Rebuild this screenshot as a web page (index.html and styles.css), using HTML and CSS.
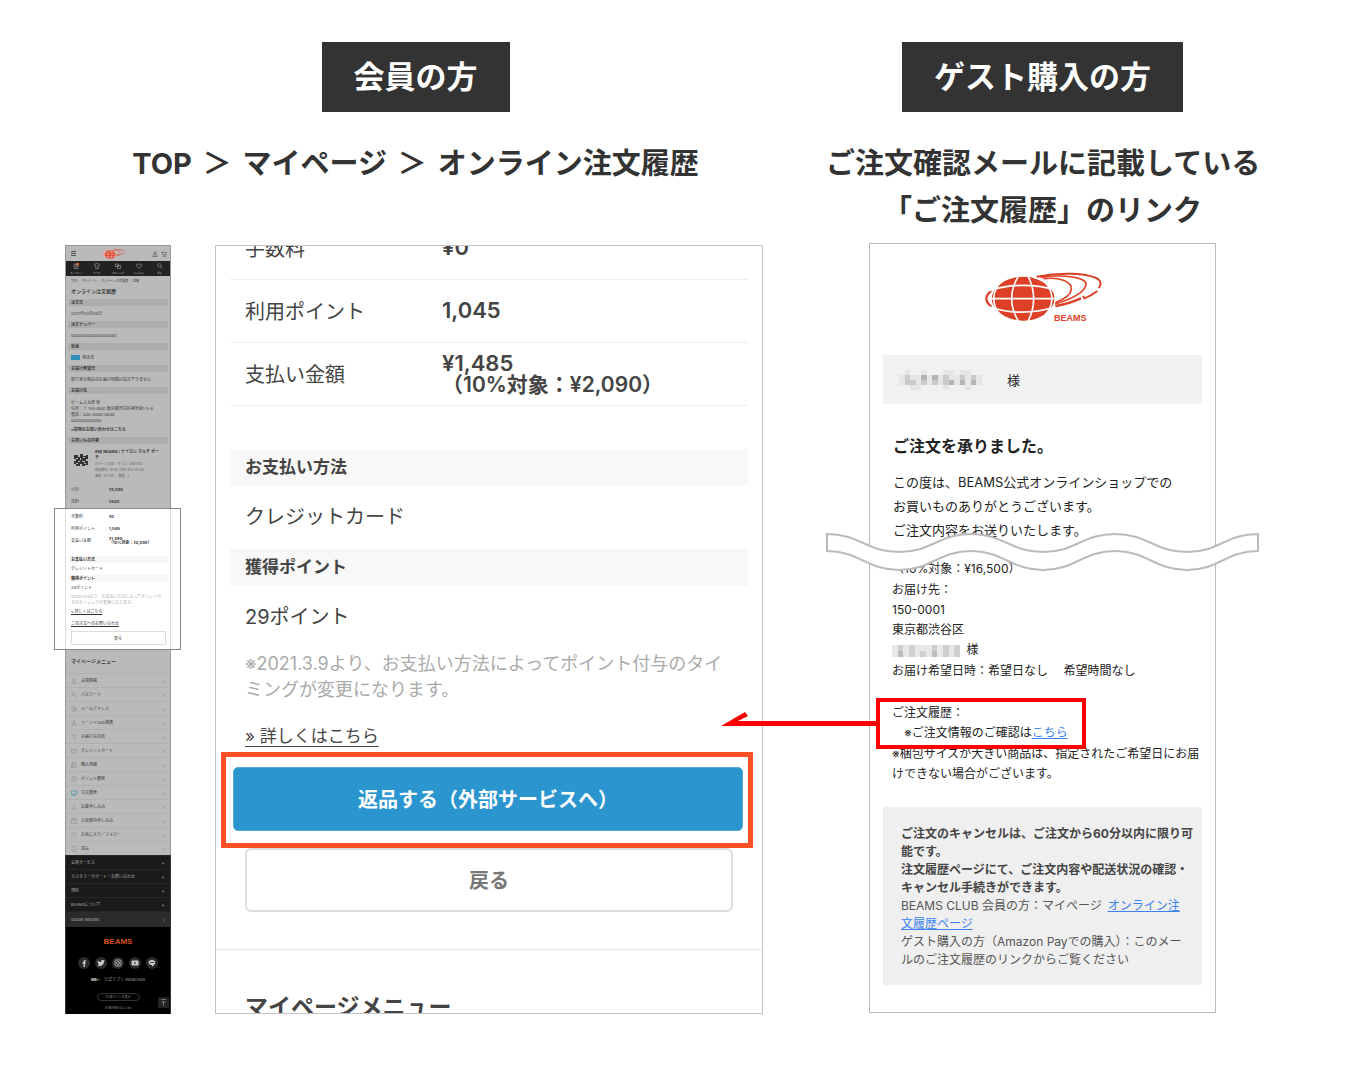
FILE: index.html
```html
<!DOCTYPE html>
<html lang="ja">
<head>
  <meta charset="UTF-8" />
  <title>返品手続きの方法</title>
  <meta name="viewport" content="width=device-width, initial-scale=1" />
  <link rel="stylesheet" href="styles.css">
</head>

<body>
  <!-- アイコン -->
  <svg class="sprite" aria-hidden="true">
    <symbol id="globe" viewBox="370 108 354 150">
      <path fill="#dd4026" d="M401 160C425 134 455 122 488 122S552 136 572 160Q592 188 572 216C552 242 520 254 488 254S425 242 401 216Q385 188 401 160Z"/>
      <path fill="none" stroke="#dd4026" stroke-width="7" d="M394 163Q360 188 394 213"/>
      <g fill="none" stroke="#fff" stroke-width="5">
        <path d="M384 188H592M384 164Q487 132 592 164M384 212Q487 246 592 210"/>
        <path d="M476 116Q430 188 476 260M500 116Q538 188 500 260"/>
        <path d="M446 112Q352 188 446 264M526 112Q622 188 526 264"/>
        <path d="M408 150Q372 188 408 226"/>
      </g>
      <g fill="none" stroke="#dd4026" stroke-width="5">
        <path d="M528 122C600 108 668 112 702 124C724 132 722 146 714 156" stroke-width="6"/>
        <path d="M540 124C610 114 680 124 676 146C672 170 630 190 584 204"/>
        <path d="M548 128C600 122 634 138 632 160C630 178 604 192 584 200"/>
        <path d="M584 210Q625 203 661 187" stroke-width="7"/>
        <path d="M667 180L671 187Q690 180 710 165" stroke-width="6"/>
      </g>
    </symbol>
    <symbol id="i-user" viewBox="0 0 12 12"><circle cx="6" cy="3.5" r="2.2"/><path d="M1.5 11Q2 6.500 6 6.500T10.500 11Z"/></symbol>
    <symbol id="i-key" viewBox="0 0 12 12"><circle cx="4" cy="4" r="2.500"/><path d="M6 6L11 10.500M9 9V11"/></symbol>
    <symbol id="i-at" viewBox="0 0 12 12"><circle cx="6" cy="6" r="5"/><circle cx="6" cy="6" r="2"/><path d="M8 4V7Q9 9 11 6"/></symbol>
    <symbol id="i-share" viewBox="0 0 12 12"><circle cx="6" cy="2.500" r="1.500"/><circle cx="2.500" cy="9.500" r="1.500"/><circle cx="9.500" cy="9.500" r="1.500"/><path d="M5 4L3 8M7 4L9 8M4 9.500H8"/></symbol>
    <symbol id="i-send" viewBox="0 0 12 12"><path d="M1 2H11L6.500 11L5 6Z"/></symbol>
    <symbol id="i-card" viewBox="0 0 12 12"><path d="M1 2H11V10H1ZM1 5H11"/></symbol>
    <symbol id="i-doc" viewBox="0 0 12 12"><path d="M3 1H10V11H3ZM1 4V11H3M5 4H8M5 6H8"/></symbol>
    <symbol id="i-point" viewBox="0 0 12 12"><circle cx="6" cy="6" r="5"/><path d="M5 9V3H6Q8.500 4.500 5 6.500"/></symbol>
    <symbol id="i-screen" viewBox="0 0 12 12"><path d="M1 2H11V9H1ZM4 11H8"/></symbol>
    <symbol id="i-hanger" viewBox="0 0 12 12"><path d="M5 3Q6 0 7 3L6 5L1 10H11L6 5"/></symbol>
    <symbol id="i-box" viewBox="0 0 12 12"><path d="M1 1H11V11H1ZM4 1V5H8V1"/></symbol>
    <symbol id="i-heart" viewBox="0 0 12 12"><path d="M6 11L1.500 6C-.5 3 3 0 6 3.500C9 0 12.500 3 10.500 6Z"/></symbol>
    <symbol id="i-door" viewBox="0 0 12 12"><path d="M2 1H10V11H2ZM7.500 6V7"/></symbol>
    <symbol id="i-shirt" viewBox="0 0 12 12"><path d="M4 1Q6 3 8 1L11 3L10 6L8.500 5.500V11H3.500V5.500L2 6L1 3Z"/></symbol>
    <symbol id="i-styling" viewBox="0 0 12 12"><path d="M1 2H7V7H1ZM5 5H11V11H5Z"/></symbol>
    <symbol id="i-search" viewBox="0 0 12 12"><circle cx="5" cy="5" r="3.500"/><path d="M7.500 7.500L11 11"/></symbol>
    <symbol id="i-news" viewBox="0 0 12 12"><path d="M2 2H10V11H2ZM4 4H8M4 6H8M4 8H8"/></symbol>
    <symbol id="i-cart" viewBox="0 0 12 12"><path d="M0 2H2L4 8H10L11 3H3"/><circle cx="5" cy="10.500" r=".8"/><circle cx="9" cy="10.500" r=".8"/></symbol>
  </svg>

  <main class="guide">
    <section class="member">
      <div class="head">
        <h1 class="tag">会員の方</h1>
        <p class="lead">TOP <span class="sep">＞</span> マイページ <span class="sep">＞</span> オンライン注文履歴</p>
      </div>

      <div class="screens">
        <!-- ページ全体の縮小図 -->
        <div class="mini">
          <div class="mini-part mini-dim">
            <div class="mini-header">
              <span class="burger"></span>
              <svg class="mini-logo"><use href="#globe"/></svg>
              <svg class="ico"><use href="#i-user"/></svg>
              <svg class="ico"><use href="#i-cart"/></svg>
            </div>
            <div class="mini-nav">
              <span class="has-new"><svg class="ico"><use href="#i-news"/></svg>タイムライン</span>
              <span><svg class="ico"><use href="#i-shirt"/></svg>アイテム</span>
              <span><svg class="ico"><use href="#i-styling"/></svg>スタイリング</span>
              <span><svg class="ico"><use href="#i-heart"/></svg>お気に入り</span>
              <span><svg class="ico"><use href="#i-search"/></svg>検索</span>
            </div>
            <p class="crumb">TOP ・ マイページ ・ オンライン注文履歴 ・ 詳細</p>
            <h2 class="mini-title">オンライン注文履歴</h2>
            <h3 class="mini-bar">注文日</h3>
            <p class="mini-val">2021年03月00日</p>
            <h3 class="mini-bar">注文ナンバー</h3>
            <p class="mini-val">000000000000000000</p>
            <h3 class="mini-bar">状態</h3>
            <p class="mini-val"><span class="status"></span>発送済</p>
            <h3 class="mini-bar">お届け希望日</h3>
            <p class="mini-val">取り寄せ商品のお届け時間は指定できません</p>
            <h3 class="mini-bar">お届け先</h3>
            <div class="mini-address">
              ビームス太郎 様<br>住所：〒 150-0001 東京都渋谷区神宮前1-5-8<br>電話：000-0000-0000<br>000000000000
              <p class="mini-ask">»荷物のお問い合わせはこちら</p>
            </div>
            <h3 class="mini-bar">お買いもの内容</h3>
            <div class="mini-item">
              <svg class="print" viewBox="0 0 14 12" shape-rendering="crispEdges"><path d="M0 1h4v2h2v-3h3v2h3v-1h2v4h-2v2h2v4h-3v1h-3v-2h-2v2h-4v-2h-2v-3h2v-2h-2z" fill="#333"/><path d="M2 4h2v1h-2zM6 4h1v2h-1zM9 3h2v1h-2zM4 7h2v1h-2zM8 7h3v1h-3zM2 9h2v1h-2zM10 9h2v1h-2z" fill="#bbb"/></svg>
              <div>
                <b>Ray BEAMS / ナイロン マルチ ポー<br>チ</b><br>
                <span class="spec">カラー：GOM／サイズ：ONE SIZE<br>商品番号：61-62-0162-902-00-88<br>価格：¥2,090 ／ 数量：1</span>
              </div>
            </div>
            <table class="mini-table">
              <tr><th>小計</th><td>¥2,090</td></tr>
              <tr><th>送料</th><td>¥440</td></tr>
            </table>
          </div>

          <div class="mini-focus">
            <div class="mini-part">
              <table class="mini-table">
                <tr><th>手数料</th><td>¥0</td></tr>
                <tr><th>利用ポイント</th><td>1,045</td></tr>
                <tr><th>支払い金額</th><td>¥1,485<br>（10%対象：¥2,090）</td></tr>
              </table>
              <h3 class="mini-bar mini-pay">お支払い方法</h3>
              <p class="mini-line">クレジットカード</p>
              <h3 class="mini-bar">獲得ポイント</h3>
              <p class="mini-line">29ポイント</p>
              <p class="mini-note">※2021.3.9より、お支払い方法によってポイント付与のタイミングが変更になります。</p>
              <p class="mini-line"><a href="#">» 詳しくはこちら</a></p>
              <p class="mini-line"><a href="#">この注文へのお問い合わせ</a></p>
              <button type="button" class="mini-back">戻る</button>
            </div>
          </div>

          <div class="mini-part mini-dim">
            <h2 class="mini-menu-title">マイページメニュー</h2>
            <ul class="mini-menu">
              <li><svg class="ico"><use href="#i-user"/></svg>会員情報</li>
              <li><svg class="ico"><use href="#i-key"/></svg>パスワード</li>
              <li><svg class="ico"><use href="#i-at"/></svg>メールアドレス</li>
              <li><svg class="ico"><use href="#i-share"/></svg>ソーシャルID連携</li>
              <li><svg class="ico"><use href="#i-send"/></svg>お届け先住所</li>
              <li><svg class="ico"><use href="#i-card"/></svg>クレジットカード</li>
              <li><svg class="ico"><use href="#i-doc"/></svg>購入明細</li>
              <li><svg class="ico"><use href="#i-point"/></svg>ポイント履歴</li>
              <li class="current"><svg class="ico"><use href="#i-screen"/></svg>注文履歴</li>
              <li><svg class="ico"><use href="#i-hanger"/></svg>試着申し込み</li>
              <li><svg class="ico"><use href="#i-box"/></svg>入荷案内申し込み</li>
              <li><svg class="ico"><use href="#i-heart"/></svg>お気に入り／フォロー</li>
              <li><svg class="ico"><use href="#i-door"/></svg>退会</li>
            </ul>
          </div>
          <div class="mini-part mini-dark">
            <ul class="mini-menu plus">
              <li>会員サービス</li>
              <li>カスタマーサポート・お問い合わせ</li>
              <li>規約</li>
              <li>BEAMSについて</li>
            </ul>
            <ul class="mini-menu global"><li>Global Website</li></ul>
          </div>
          <div class="mini-part mini-footer">
            <p class="brand">BEAMS</p>
            <div class="sns">
              <svg viewBox="0 0 12 12"><circle cx="6" cy="6" r="6" fill="#2b2b2b"/><path d="M5.500 10V6.500H4.500V5H5.500Q5.300 2.600 7.800 3V4.200Q6.800 4 6.900 5H7.800L7.600 6.500H6.900V10Z" fill="#ccc"/></svg>
              <svg viewBox="0 0 12 12"><circle cx="6" cy="6" r="6" fill="#2b2b2b"/><path d="M2.800 3.500Q4.300 5 6 5Q6 2.600 8 3.200L9.500 3L9 4.600C9 8.500 5 10 2.600 8.400L4 7.800Q3 7 3.200 6Q2.400 4.800 2.800 3.500Z" fill="#ccc"/></svg>
              <svg viewBox="0 0 12 12"><circle cx="6" cy="6" r="6" fill="#2b2b2b"/><rect x="3" y="3" width="6" height="6" rx="1.500" fill="none" stroke="#ccc" stroke-width=".8"/><circle cx="6" cy="6" r="1.500" fill="none" stroke="#ccc" stroke-width=".8"/></svg>
              <svg viewBox="0 0 12 12"><circle cx="6" cy="6" r="6" fill="#2b2b2b"/><rect x="2.500" y="3.500" width="7" height="5" rx="1" fill="#ccc"/><path d="M5.200 4.800L7.200 6L5.200 7.200Z" fill="#2b2b2b"/></svg>
              <svg viewBox="0 0 12 12"><circle cx="6" cy="6" r="6" fill="#2b2b2b"/><path d="M6 3C10 3 10.500 7 6 9.500V8C1.500 8 1.500 3 6 3Z" fill="#ccc"/><path d="M4 5.500H8" stroke="#2b2b2b" stroke-width=".8"/></svg>
            </div>
            <p class="app"><b>We:-</b>　公式アプリ WeBEAMS</p>
            <button type="button" class="pc">PC版サイトを表示</button>
            <p class="copy">© BEAMS Co., Ltd.</p>
            <svg class="to-top" viewBox="0 0 11 11"><rect width="11" height="11" rx="1" fill="#222"/><path d="M3 2.500H8M5.500 9V4M3.500 6L5.500 4L7.500 6" fill="none" stroke="#888" stroke-width=".8"/></svg>
          </div>
        </div>

        <!-- 注文履歴の拡大 -->
        <div class="order">
          <table class="amounts">
            <tr><th>手数料</th><td>¥0</td></tr>
            <tr><th>利用ポイント</th><td>1,045</td></tr>
            <tr><th>支払い金額</th><td>¥1,485<br><span class="tax">（10%対象：¥2,090）</span></td></tr>
          </table>
          <h2 class="bar">お支払い方法</h2>
          <p class="value">クレジットカード</p>
          <h2 class="bar">獲得ポイント</h2>
          <p class="value">29ポイント</p>
          <p class="note">※2021.3.9より、お支払い方法によってポイント付与のタイ<br>ミングが変更になります。</p>
          <p class="more"><a href="#">» 詳しくはこちら</a></p>
          <div class="return-box">
            <button type="button" class="return">返品する（外部サービスへ）</button>
          </div>
          <button type="button" class="back">戻る</button>
          <h2 class="menu-title">マイページメニュー</h2>
        </div>
      </div>
    </section>

    <section class="guest">
      <div class="head">
        <h1 class="tag">ゲスト購入の方</h1>
        <p class="lead">ご注文確認メールに記載している<br>「ご注文履歴」のリンク</p>
      </div>

      <div class="mail">
        <div class="logo">
          <svg class="logo-mark" viewBox="0 0 118 50" role="img" aria-label="BEAMS">
            <use href="#globe" width="118" height="50"/>
            <text x="70" y="49" class="logo-text">BEAMS</text>
          </svg>
        </div>
        <p class="to">
          <svg class="mosaic" viewBox="0 0 15 4" preserveAspectRatio="none" shape-rendering="crispEdges">
            <path fill="#e6e6e6" d="M0 1h15v2h-15zM1 0h1v1h-1zM4 0h1v1h-1zM8 0h2v1h-2zM11 0h2v1h-2zM2 3h2v1h-2zM8 3h1v1h-1zM12 3h1v1h-1z"/>
            <path fill="#cacaca" d="M1 1h1v2h-1zM2 2h1v1h-1zM4 1h1v2h-1zM6 1h1v2h-1zM8 1h1v2h-1zM9 2h1v1h-1zM11 1h1v2h-1zM13 1h1v2h-1z"/>
            <path fill="#b4b4b4" d="M4 1h1v1h-1zM6 1h1v1h-1zM9 2h1v1h-1zM11 2h1v1h-1zM13 2h1v1h-1z"/>
          </svg>
          <span>様</span>
        </p>
        <h2>ご注文を承りました。</h2>
        <div class="torn">
          <p class="thanks">この度は、BEAMS公式オンラインショップでの<br>お買いものありがとうございます。<br>ご注文内容をお送りいたします。</p>
          <svg class="wave" viewBox="0 0 433 40">
            <path fill="#fff" stroke="#bbb" stroke-width="2" d="M1 2C33 2 41 20 73 20S113 2 145 2S185 20 217 20S257 2 289 2S329 20 361 20S400 2 432 2V19C400 19 393 38 361 38S321 19 289 19S249 38 217 38S177 19 145 19S105 38 73 38S33 19 1 19Z"/>
          </svg>
        </div>
        <div class="detail">
          <p>（10%対象：¥16,500）</p>
          <p>お届け先：<br>150-0001<br>東京都渋谷区<br>
            <svg class="mosaic-s" viewBox="0 0 12 2" preserveAspectRatio="none" shape-rendering="crispEdges">
              <path fill="#e8e8e8" d="M0 0h12v2h-12z"/>
              <path fill="#cfcfcf" d="M1 0h1v2h-1zM3 0h1v2h-1zM5 1h1v1h-1zM7 0h1v2h-1zM9 0h1v2h-1zM11 0h1v2h-1z"/>
              <path fill="#bcbcbc" d="M1 1h1v1h-1zM7 1h1v1h-1z"/>
            </svg>
            様</p>
          <p>お届け希望日時：希望日なし　 希望時間なし</p>
          <div class="history">
            <p>ご注文履歴：<br>　※ご注文情報のご確認は<a href="#">こちら</a></p>
            <span class="frame"></span>
            <svg class="arrow" viewBox="0 0 157 16"><path d="M157 11.500H12" fill="none" stroke="#f00" stroke-width="5"/><path d="M0 14L24 0L27 4L17 9V14Z" fill="#f00"/></svg>
          </div>
          <p>※梱包サイズが大きい商品は、指定されたご希望日にお届<br>けできない場合がございます。</p>
        </div>
        <div class="notice">
          <b>ご注文のキャンセルは、ご注文から60分以内に限り可<br>能です。<br>注文履歴ページにて、ご注文内容や配送状況の確認・<br>キャンセル手続きができます。</b><br>
          BEAMS CLUB 会員の方：マイページ&ensp;<a href="#">オンライン注<br>文履歴ページ</a><br>
          ゲスト購入の方（Amazon Payでの購入）：このメー<br>ルのご注文履歴のリンクからご覧ください
        </div>
      </div>
    </section>
  </main>
</body>
</html>
```

FILE: styles.css
```css
* { box-sizing: border-box; }
body {
  margin: 0;
  background: #fff;
  color: #333;
  font-family: Inter, "Noto Sans CJK JP", sans-serif;
}
h1, h2, h3, p, ul { margin: 0; padding: 0; }
ul { list-style: none; }
button { font-family: inherit; cursor: pointer; }
table { border-collapse: collapse; }
th { text-align: left; font-weight: 400; }
th, td { padding: 0; }
.sprite { display: none; }

.guide {
  display: grid;
  grid-template-columns: minmax(0, 709fr) minmax(0, 433fr);
  gap: 63px;
  align-items: start;
  padding: 42px 101px 60px 54px;
}
.head { text-align: center; }
.member .head { padding: 0 0 2px 14px; }
.tag {
  display: inline-block;
  padding: 0 32px;
  background: #333;
  color: #fff;
  font-size: 31px;
  font-weight: 700;
  line-height: 70px;
  vertical-align: top;
}
.lead {
  min-height: 94px;
  margin: 28px 0 9px;
  font-size: 29px;
  font-weight: 700;
  line-height: 47px;
  white-space: nowrap;
}
.sep { margin: 0 4px; }
.screens { display: flex; gap: 34px; align-items: flex-start; }

/* 縮小図 */
.mini {
  flex: none;
  width: 127px;
  padding: 0 10px 0 11px;
  font-size: 4px;
  line-height: 6px;
}
.mini-part { border: 0 solid #999; border-width: 0 1px; background: #fff; }
.mini-dim { background: #bababa; color: #3a3a3a; }
.mini-dim:first-child { border-top-width: 1px; }
.ico { width: 6px; height: 6px; fill: none; stroke: currentColor; stroke-width: 1; }
.mini-header { display: flex; align-items: center; gap: 3px; height: 15px; padding: 0 3px 0 5px; }
.burger { width: 5px; height: 5px; border: solid #555; border-width: 1px 0; background: linear-gradient(#bababa 1px, #555 1px, #555 2px, #bababa 2px); }
.mini-logo { width: 24px; height: 10px; margin: 0 auto; }
.mini-nav { display: grid; grid-template-columns: repeat(5, 1fr); height: 15px; background: #222; color: #bbb; font-size: 2px; line-height: 4px; text-align: center; }
.mini-nav span { display: flex; flex-direction: column; align-items: center; padding-top: 2px; gap: 2px; white-space: nowrap; }
.has-new .ico { background: radial-gradient(circle at 5px 1px, #f40 1px, transparent 2px); }
.crumb { padding-left: 5px; font-size: 3px; line-height: 11px; white-space: nowrap; }
.mini-title { padding-left: 5px; margin-bottom: 3px; font-size: 5px; line-height: 9px; }
.mini-bar { margin: 0 2px; padding-left: 3px; background: #f7f7f7; font-size: 4px; line-height: 7px; }
.mini-dim .mini-bar { background: #adadad; }
.mini-val { padding-left: 5px; line-height: 15px; white-space: nowrap; }
.status { display: inline-block; width: 9px; height: 5px; margin-right: 2px; background: #2d8fb5; vertical-align: middle; }
.mini-address { height: 43px; padding: 6px 0 0 5px; white-space: nowrap; }
.mini-ask { margin-top: 3px; font-weight: 700; }
.mini-item { display: flex; gap: 7px; padding: 5px 5px 5px 8px; white-space: nowrap; }
.print { flex: none; width: 14px; height: 12px; margin-top: 5px; }
.spec { color: #666; font-size: 3px; }
.mini-table { width: 100px; margin: 0 2px; }
.mini-table tr { height: 12px; }
.mini-table th { width: 41px; padding-left: 3px; }
.mini-table td { font-weight: 700; line-height: 4px; white-space: nowrap; }
.mini-focus { margin: 0 -10px 0 -11px; padding: 0 9px 0 10px; border: 1px solid #888; background: #fff; }
.mini-focus .mini-table { margin-top: 1px; }
.mini-focus .mini-part { padding: 1px 0 4px; border-color: #ddd; }
.mini-pay { margin-top: 9px; }
.mini-line { padding-left: 5px; line-height: 12px; }
.mini-line a { color: inherit; }
.mini-note { padding: 0 5px; color: #aaa; }
.mini-back { display: block; width: 95px; height: 14px; margin: 1px auto 0; padding: 0; border: 1px solid #ddd; border-radius: 1px; background: #fff; color: #333; font-size: 4px; }
.mini-menu-title { padding-left: 5px; font-size: 5px; line-height: 23px; }
.mini-menu li { display: flex; align-items: center; gap: 4px; height: 14px; padding: 0 5px; border-top: 1px solid #b0b0b0; }
.mini-menu li::after { content: "›"; margin-left: auto; color: #888; font-size: 6px; }
.mini-menu .ico { color: #888; }
.mini-menu .current .ico { color: #1583b5; }
.mini-dark { background: #1b1b1b; color: #aaa; border-color: #333; }
.mini-dark .mini-menu li { border-color: #262626; }
.mini-menu.plus li::after { content: "+"; }
.mini-menu.global li { height: 16px; background: #2b2b2b; }
.mini-footer { position: relative; height: 87px; padding-top: 10px; background: #000; color: #999; border-color: #333; text-align: center; }
.brand { color: #d4501c; font: 700 8px/10px "Liberation Sans", sans-serif; }
.sns { display: flex; justify-content: center; gap: 5px; margin: 10px 0 8px; }
.sns svg { width: 12px; height: 12px; }
.app b { color: #ddd; }
.pc { display: block; width: 43px; height: 8px; margin: 10px auto 4px; padding: 0; border: 1px solid #333; border-radius: 4px; background: #000; color: #888; font-size: 3px; line-height: 6px; }
.copy { font-size: 3px; }
.to-top { position: absolute; right: 1px; bottom: 6px; width: 11px; height: 11px; }

/* 注文履歴 */
.order { flex: 1; overflow: hidden; border: 1px solid #c4c4c4; color: #444; }
.amounts { width: calc(100% - 28px); margin: -30px 14px 43px; font-size: 20px; }
.amounts tr { height: 63px; border-bottom: 1px solid #eee; }
.amounts th { width: 212px; padding-left: 15px; }
.amounts td { font-size: 22px; font-weight: 600; line-height: 21px; }
.tax { font-size: 21px; }
.bar { margin: 0 14px; padding-left: 15px; background: #f8f8f8; font-size: 17px; line-height: 37px; }
.value { padding-left: 29px; font-size: 20px; line-height: 63px; }
.note { padding: 2px 29px 0; color: #aaa; font-size: 18px; line-height: 26px; white-space: nowrap; }
.more { padding: 20px 29px 3px; font-size: 17px; line-height: 26px; }
.more a { color: inherit; text-underline-offset: 4px; text-decoration-thickness: 1px; }
.return-box { margin: 0 9px 0 5px; padding: 10px 5px 12px 7px; border: 5px solid #ff5023; }
.return { display: block; width: 100%; height: 64px; border: 1px solid #55add8; border-radius: 5px; background: #2a95cf; color: #fff; font-size: 20px; font-weight: 700; }
.back { display: block; width: calc(100% - 58px); height: 64px; margin: 0 29px 36px; border: 2px solid #ddd; border-radius: 6px; background: #fff; color: #777; font-size: 20px; font-weight: 700; }
.menu-title { height: 65px; padding: 39px 29px 0; border-top: 3px solid #f3f3f3; overflow: hidden; font-size: 23px; line-height: 34px; }

/* 注文確認メール */
.mail { margin: 0 43px; padding: 28px 13px 27px; border: 1px solid #bbb; color: #222; }
.logo { display: flex; justify-content: center; margin-bottom: 33px; }
.logo-mark { width: 118px; height: 50px; overflow: visible; }
.logo-text { fill: #dd4026; font: 700 9px "Liberation Sans", sans-serif; }
.to { display: flex; align-items: center; gap: 25px; height: 49px; padding-left: 16px; background: #f1f1f1; font-size: 13px; }
.mosaic { width: 83px; height: 20px; }
.mail h2 { margin: 30px 10px 12px; font-size: 16px; line-height: 24px; }
.torn { position: relative; }
.thanks { padding-left: 10px; font-size: 13px; line-height: 24px; white-space: nowrap; }
.wave { position: absolute; left: -57px; top: 62px; width: calc(100% + 114px); }
.detail { padding: 17px 0 0 9px; font-size: 12px; line-height: 20px; white-space: nowrap; }
.detail p { margin-bottom: 1px; }
.mosaic-s { width: 68px; height: 12px; margin-right: 3px; vertical-align: middle; }
.mail a { color: #3b82f0; }
.history { position: relative; margin-top: 22px; }
.frame { position: absolute; left: -16px; top: -5px; width: 210px; height: 51px; border: 4px solid #f00; }
.arrow { position: absolute; right: calc(100% + 14px); top: 9px; width: 157px; height: 16px; }
.notice { margin-top: 23px; padding: 18px 18px 16px; background: #efefef; color: #555; font-size: 12px; line-height: 18px; white-space: nowrap; }
.notice b { color: #444; }
```
